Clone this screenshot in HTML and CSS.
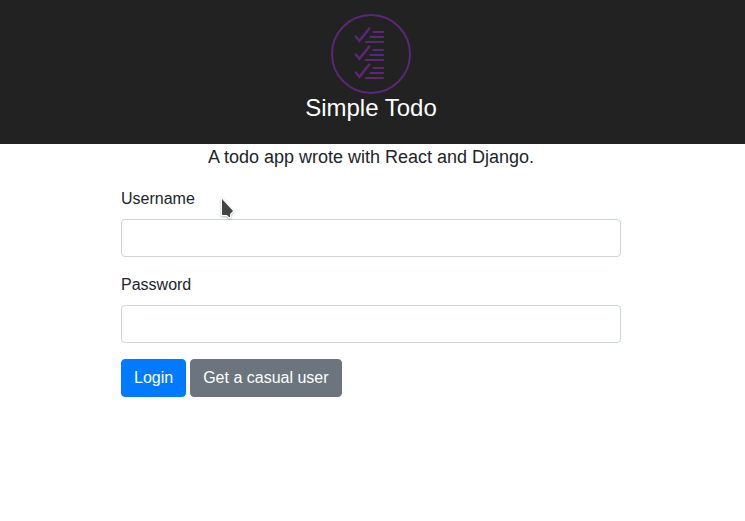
FILE: index.html
```html
<!DOCTYPE html>
<html lang="en">
<head>
<meta charset="utf-8">
<meta name="viewport" content="width=device-width, initial-scale=1">
<title>Simple Todo</title>
<link rel="stylesheet" href="styles.css">
</head>
<body>
<header class="header">
  <svg class="logo" viewBox="0 0 80 80" aria-hidden="true">
    <circle cx="40" cy="40" r="39"/>
    <g id="item">
      <path class="check" d="M24.8 22.4L28.4 26.8L38.3 14.4"/>
      <path d="M42.5 18H52.2M39.3 23H52.2M35 27.9H52.2"/>
    </g>
    <use href="#item" y="18"/>
    <use href="#item" y="36"/>
  </svg>
  <h1 class="title">Simple Todo</h1>
</header>
<main class="content">
  <p class="tagline">A todo app wrote with React and Django.</p>
  <form class="form">
    <div class="group">
      <label for="username">Username</label>
      <input id="username" type="text">
    </div>
    <div class="group">
      <label for="password">Password</label>
      <input id="password" type="password">
    </div>
    <div class="actions">
      <button class="btn primary" type="submit">Login</button>
      <button class="btn secondary" type="button">Get a casual user</button>
    </div>
  </form>
</main>
<svg class="pointer" viewBox="0 0 16 24" aria-hidden="true">
  <path d="M2 2V18H7L9 20L10 20V17L13 14Z"/>
</svg>
</body>
</html>
```
FILE: styles.css
```css
* {
  box-sizing: border-box;
}

body {
  margin: 0;
  background: #fff;
  color: #212529;
  font: 16px/24px "Liberation Sans", Arial, sans-serif;
}

.header {
  display: flex;
  flex-direction: column;
  align-items: center;
  padding: 14px 3px 22px 0;
  background: #222;
  color: #fff;
}

.logo {
  width: 80px;
  height: 80px;
  fill: none;
  stroke: #5b2777;
  stroke-width: 2;
  stroke-linecap: round;
}

.logo .check {
  stroke-width: 2.4;
}

.title {
  margin: 0;
  font-size: 24px;
  line-height: 28px;
  font-weight: 400;
}

.content {
  padding-right: 3px;
}

.tagline {
  margin: 0 0 16px;
  font-size: 18px;
  line-height: 27px;
  text-align: center;
}

.form {
  max-width: 500px;
  margin: 0 auto;
}

.group {
  margin-bottom: 16px;
}

.group label {
  display: block;
  margin-bottom: 8px;
}

.group input {
  display: block;
  width: 100%;
  height: 38px;
  padding: 6px 12px;
  border: 1px solid #ced4da;
  border-radius: 4px;
  font: inherit;
}

.actions {
  display: flex;
  gap: 4px;
}

.btn {
  padding: 6px 12px;
  border: 1px solid transparent;
  border-radius: 4px;
  color: #fff;
  font: inherit;
}

.primary {
  background: #007bff;
  border-color: #007bff;
}

.secondary {
  background: #6c757d;
  border-color: #6c757d;
}

.pointer {
  position: absolute;
  left: 220px;
  top: 197px;
  width: 16px;
  height: 24px;
  fill: #444;
  stroke: #fff;
  stroke-width: 2;
  paint-order: stroke;
  filter: drop-shadow(0 1px 1px #0004);
}
```
